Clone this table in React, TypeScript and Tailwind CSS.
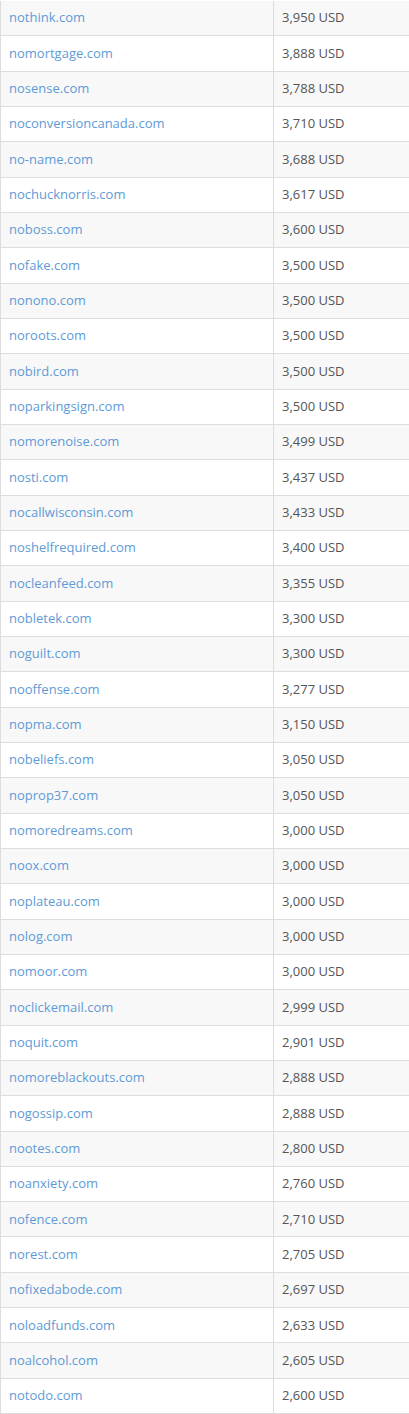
const rows: [string, string][] = [
  ["nothink.com", "3,950"],
  ["nomortgage.com", "3,888"],
  ["nosense.com", "3,788"],
  ["noconversioncanada.com", "3,710"],
  ["no-name.com", "3,688"],
  ["nochucknorris.com", "3,617"],
  ["noboss.com", "3,600"],
  ["nofake.com", "3,500"],
  ["nonono.com", "3,500"],
  ["noroots.com", "3,500"],
  ["nobird.com", "3,500"],
  ["noparkingsign.com", "3,500"],
  ["nomorenoise.com", "3,499"],
  ["nosti.com", "3,437"],
  ["nocallwisconsin.com", "3,433"],
  ["noshelfrequired.com", "3,400"],
  ["nocleanfeed.com", "3,355"],
  ["nobletek.com", "3,300"],
  ["noguilt.com", "3,300"],
  ["nooffense.com", "3,277"],
  ["nopma.com", "3,150"],
  ["nobeliefs.com", "3,050"],
  ["noprop37.com", "3,050"],
  ["nomoredreams.com", "3,000"],
  ["noox.com", "3,000"],
  ["noplateau.com", "3,000"],
  ["nolog.com", "3,000"],
  ["nomoor.com", "3,000"],
  ["noclickemail.com", "2,999"],
  ["noquit.com", "2,901"],
  ["nomoreblackouts.com", "2,888"],
  ["nogossip.com", "2,888"],
  ["nootes.com", "2,800"],
  ["noanxiety.com", "2,760"],
  ["nofence.com", "2,710"],
  ["norest.com", "2,705"],
  ["nofixedabode.com", "2,697"],
  ["noloadfunds.com", "2,633"],
  ["noalcohol.com", "2,605"],
  ["notodo.com", "2,600"],
];

export default function App() {
  return (
    <div className="w-[409px] h-[1414px] overflow-hidden bg-white pt-px font-['Open_Sans',sans-serif] text-[13px]">
      <div className="border-l border-[#dddddd]">
        {rows.map(([domain, price], i) => (
          <div
            key={domain}
            className={
              i % 2 === 0
                ? "grid grid-cols-[273px_1fr] h-[35.33px] border-b border-[#dddddd] bg-[#f8f8f8]"
                : "grid grid-cols-[273px_1fr] h-[35.33px] border-b border-[#dddddd] bg-white"
            }
          >
            <div className="flex items-center px-2 border-r border-[#dddddd]">
              <a href="#" className="text-[#5e9bd6]">
                {domain}
              </a>
            </div>
            <div className="flex items-center px-2 text-[#555555]">
              {price} USD
            </div>
          </div>
        ))}
      </div>
    </div>
  );
}
